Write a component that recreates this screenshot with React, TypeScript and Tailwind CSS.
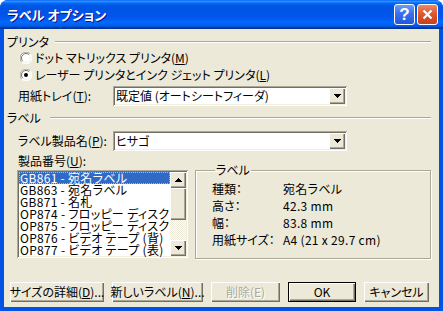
import type { ReactNode } from 'react'

// classic 3D bevels used by the dialog's controls
const raised =
  'bg-[#ece9d8] shadow-[inset_1px_1px_0_#fff,inset_-1px_-1px_0_#716f64,inset_-2px_-2px_0_#aca899]'
const sunken =
  'bg-white p-[2px] shadow-[inset_1px_1px_0_#aca899,inset_-1px_-1px_0_#fff,inset_2px_2px_0_#716f64,inset_-2px_-2px_0_#f1efe2]'

const U = ({ children }: { children: ReactNode }) => (
  <span className="underline underline-offset-[1px]">{children}</span>
)

function Arrow({ up = false }: { up?: boolean }) {
  const rows = up ? [3, 2, 1, 0] : [0, 1, 2, 3]
  return (
    <svg width="7" height="4" viewBox="0 0 7 4" shapeRendering="crispEdges">
      {rows.map((r, i) => (
        <rect key={i} x={r} y={i} width={7 - r * 2} height={1} fill="#000" />
      ))}
    </svg>
  )
}

function Radio({ checked = false }: { checked?: boolean }) {
  return (
    <svg width="12" height="12" viewBox="0 0 12 12" className="shrink-0">
      <circle cx="6" cy="6" r="5.5" fill="#fff" />
      <path d="M10.2 1.8A5.5 5.5 0 0 0 1.8 10.2" stroke="#aca899" fill="none" />
      <path d="M9.2 2.8A4.5 4.5 0 0 0 2.8 9.2" stroke="#716f64" fill="none" />
      <path d="M1.8 10.2A5.5 5.5 0 0 0 10.2 1.8" stroke="#fff" fill="none" />
      <path d="M2.8 9.2A4.5 4.5 0 0 0 9.2 2.8" stroke="#f1efe2" fill="none" />
      {checked && <circle cx="6" cy="6" r="2" fill="#000" />}
    </svg>
  )
}

function Combo({ value }: { value: string }) {
  return (
    <div className={`flex h-[20px] w-[234px] ${sunken}`}>
      <div className="flex-1 pl-[1px] leading-[16px]">{value}</div>
      <div className={`flex w-[16px] items-center justify-center ${raised}`}>
        <Arrow />
      </div>
    </div>
  )
}

function GroupHeader({ label, gap }: { label: string; gap: string }) {
  return (
    <div className="flex h-[12px] items-center pl-[3px] pr-[8px]">
      <span className="leading-[12px]">{label}</span>
      <div className={`h-[2px] flex-1 border-t border-b border-t-[#aca899] border-b-white ${gap}`} />
    </div>
  )
}

function Btn({ w, children, isDefault = false, disabled = false }: {
  w: string
  children: ReactNode
  isDefault?: boolean
  disabled?: boolean
}) {
  return (
    <div className={`h-[20px] ${w} ${isDefault ? 'border border-black' : ''}`}>
      <div
        className={`flex h-full items-center justify-center leading-[12px] ${raised} ${
          disabled ? 'text-[#aca899] [text-shadow:1px_1px_0_#fff]' : ''
        }`}
      >
        <span className="whitespace-nowrap">{children}</span>
      </div>
    </div>
  )
}

const products = [
  'GB861 - 宛名ラベル',
  'GB863 - 宛名ラベル',
  'GB871 - 名札',
  'OP874 - フロッピー ディスク',
  'OP875 - フロッピー ディスク',
  'OP876 - ビデオ テープ (背)',
  'OP877 - ビデオ テープ (表)',
]

const details = [
  ['種類：', '宛名ラベル'],
  ['高さ：', '42.3 mm'],
  ['幅：', '83.8 mm'],
  ['用紙サイズ：', 'A4 (21 x 29.7 cm)'],
]

export default function App() {
  return (
    <div className="h-[311px] w-[443px] bg-white font-['Noto_Sans_CJK_JP',sans-serif] text-[12px] text-black [font-feature-settings:'palt']">
      <div className="flex h-full flex-col overflow-hidden rounded-t-[8px] bg-[#0053e4]">
        {/* title bar */}
        <div className="flex h-[29px] shrink-0 items-center bg-[linear-gradient(180deg,#0058ee_0%,#3593ff_4%,#288eff_6%,#127dff_8%,#036ffc_10%,#0262ee_14%,#0057e5_20%,#0054e3_24%,#0055eb_56%,#005bf5_66%,#026afe_76%,#0062ef_86%,#0052d6_92%,#0040ab_94%,#003092_100%)] pl-[7px] pr-[5px]">
          <span className="flex-1 text-[13px] font-bold leading-[14px] text-white [text-shadow:1px_1px_0_#0f1089]">
            ラベル オプション
          </span>
          <div className="flex gap-[2px]">
            <div className="flex h-[21px] w-[21px] items-center justify-center rounded-[3px] border border-white bg-[linear-gradient(180deg,#6b9cf8_0%,#3a6ff0_45%,#2456d8_100%)] font-['Liberation_Sans',sans-serif] text-[17px] font-bold leading-[17px] text-white">
              ?
            </div>
            <div className="flex h-[21px] w-[21px] items-center justify-center rounded-[3px] border border-white bg-[linear-gradient(180deg,#ea8a6b_0%,#e0582f_45%,#c8401c_100%)]">
              <svg width="11" height="11" viewBox="0 0 11 11">
                <path d="M1.5 1.5l8 8M9.5 1.5l-8 8" stroke="#fff" strokeWidth="2.2" />
              </svg>
            </div>
          </div>
        </div>

        {/* client area */}
        <div className="mx-[4px] mb-[4px] flex flex-1 flex-col bg-[#ece9d8]">
          <div className="mt-[7px]">
            <GroupHeader label="プリンタ" gap="ml-[6px]" />
          </div>

          <div className="mt-[3px] flex h-[14px] items-center gap-[3px] pl-[16px] leading-[12px]">
            <Radio />
            <span>
              ドット マトリックス プリンタ(<U>M</U>)
            </span>
          </div>
          <div className="mt-[3px] flex h-[14px] items-center gap-[3px] pl-[16px] leading-[12px]">
            <Radio checked />
            <span>
              レーザー プリンタとインク ジェット プリンタ(<U>L</U>)
            </span>
          </div>

          <div className="mt-[4px] flex items-center pl-[14px]">
            <span className="w-[95px] leading-[12px]">
              用紙トレイ(<U>T</U>):
            </span>
            <Combo value="既定値 (オートシートフィーダ)" />
          </div>

          <div className="mt-[6px]">
            <GroupHeader label="ラベル" gap="ml-[9px]" />
          </div>

          <div className="mt-[7px] flex items-center pl-[14px]">
            <span className="w-[95px] leading-[12px]">
              ラベル製品名(<U>P</U>):
            </span>
            <Combo value="ヒサゴ" />
          </div>

          <div className="mt-[4px] flex items-start">
            <div className="ml-[13px] flex flex-col">
              <span className="pl-[1px] leading-[12px]">
                製品番号(<U>U</U>):
              </span>
              <div className={`mt-[3px] flex h-[88px] w-[171px] ${sunken}`}>
                <div className="flex-1">
                  {products.map((p, i) => (
                    <div
                      key={p}
                      className={`h-[12px] whitespace-nowrap pl-[1px] leading-[12px] tracking-[0.3px] ${
                        i === 0
                          ? 'bg-[#316ac5] text-white outline-1 -outline-offset-1 outline-dotted outline-[#e8b050]'
                          : ''
                      }`}
                    >
                      {p}
                    </div>
                  ))}
                </div>
                {/* scrollbar */}
                <div className="flex w-[16px] flex-col">
                  <div className={`flex h-[16px] items-center justify-center ${raised}`}>
                    <Arrow up />
                  </div>
                  <div className={`h-[32px] ${raised}`} />
                  <div className="flex-1 bg-[repeating-conic-gradient(#fff_0_25%,#ece9d8_0_50%)] bg-[length:2px_2px]" />
                  <div className={`flex h-[16px] items-center justify-center ${raised}`}>
                    <Arrow />
                  </div>
                </div>
              </div>
            </div>

            <fieldset className="ml-[7px] mt-[9px] h-[95px] w-[236px] border border-[#aca899] pl-[16px] shadow-[inset_1px_1px_0_#fff,1px_1px_0_#fff]">
              <legend className="ml-[3px] px-[1px] leading-[12px]">ラベル</legend>
              <div className="mt-[4px] grid grid-cols-[71px_1fr]">
                {details.map(([k, v]) => (
                  <div key={k} className="contents">
                    <span className="h-[17px] leading-[17px]">{k}</span>
                    <span className="h-[17px] leading-[17px] tracking-[0.3px]">{v}</span>
                  </div>
                ))}
              </div>
            </fieldset>
          </div>

          <div className="mb-[5px] mt-auto flex gap-[8px] pl-[6px]">
            <Btn w="w-[94px]">
              サイズの詳細(<U>D</U>)...
            </Btn>
            <Btn w="w-[91px]">
              新しいラベル(<U>N</U>)...
            </Btn>
            <Btn w="w-[69px]" disabled>
              削除(E)
            </Btn>
            <Btn w="w-[68px]" isDefault>
              OK
            </Btn>
            <Btn w="w-[65px]">キャンセル</Btn>
          </div>
        </div>
      </div>
    </div>
  )
}
